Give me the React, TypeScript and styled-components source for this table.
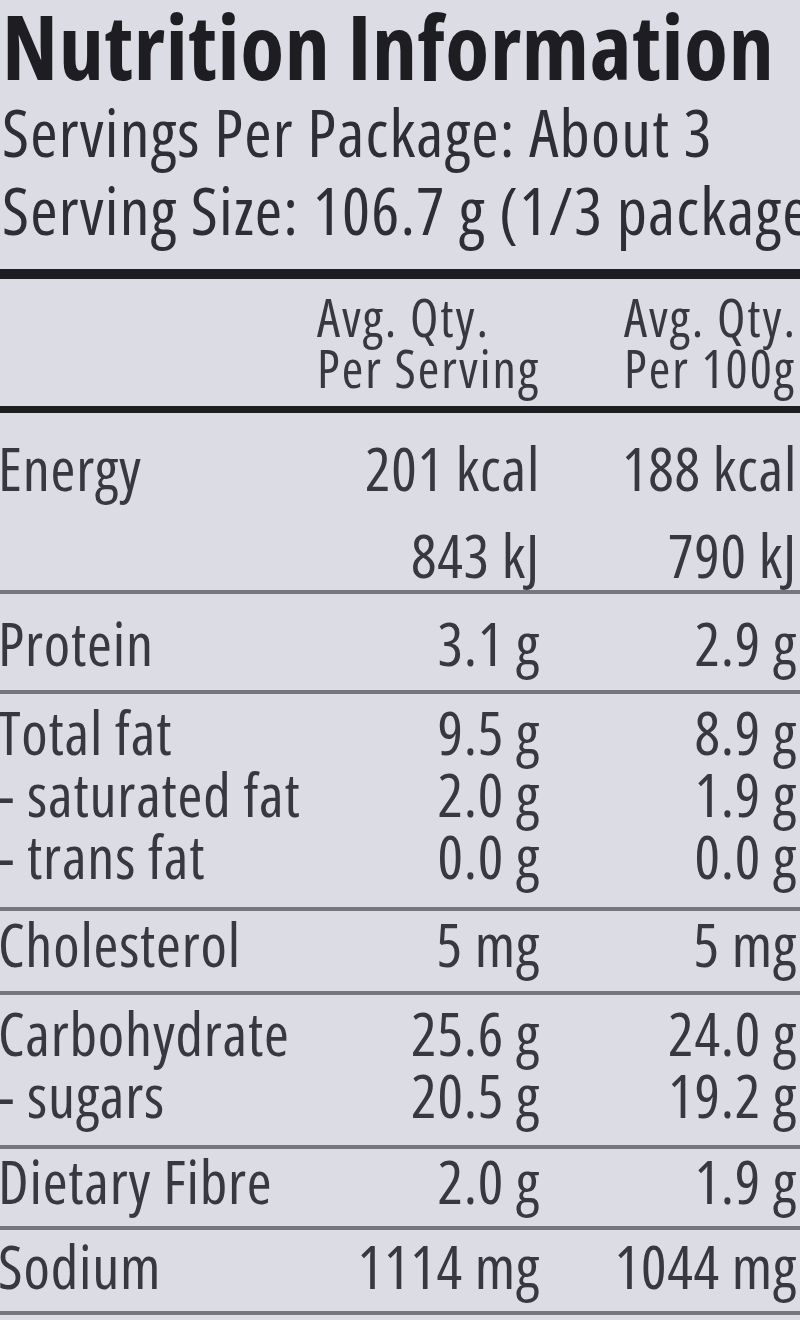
import React, { FC } from 'react';
import styled, { createGlobalStyle } from 'styled-components';

const GlobalStyle = createGlobalStyle`
    html, body {
        margin: 0;
        padding: 0;
        background: #dcdce4;
    }
    body {
        width: 800px;
        height: 1320px;
        overflow: hidden;
        font-family: "Open Sans", "Liberation Sans", sans-serif;
        font-stretch: 75%;
        color: #38383f;
    }
`;

interface Nutrient {
    label: string;
    serving: string;
    per100: string;
}

interface Group {
    rows: Nutrient[];
    padTop?: number;
    padBottom?: number;
    gap?: number;
}

const groups: Group[] = [
    {
        padTop: 24,
        padBottom: 4,
        gap: 25,
        rows: [
            { label: 'Energy', serving: '201 kcal', per100: '188 kcal' },
            { label: '', serving: '843 kJ', per100: '790 kJ' },
        ],
    },
    { padTop: 18, padBottom: 16, rows: [{ label: 'Protein', serving: '3.1 g', per100: '2.9 g' }] },
    {
        padBottom: 20,
        rows: [
            { label: 'Total fat', serving: '9.5 g', per100: '8.9 g' },
            { label: '- saturated fat', serving: '2.0 g', per100: '1.9 g' },
            { label: '- trans fat', serving: '0.0 g', per100: '0.0 g' },
        ],
    },
    { padTop: 2, padBottom: 16, rows: [{ label: 'Cholesterol', serving: '5 mg', per100: '5 mg' }] },
    {
        padTop: 7,
        padBottom: 19,
        rows: [
            { label: 'Carbohydrate', serving: '25.6 g', per100: '24.0 g' },
            { label: '- sugars', serving: '20.5 g', per100: '19.2 g' },
        ],
    },
    { padTop: 1, rows: [{ label: 'Dietary Fibre', serving: '2.0 g', per100: '1.9 g' }] },
    { padTop: 5, rows: [{ label: 'Sodium', serving: '1114 mg', per100: '1044 mg' }] },
];

const App: FC = () => {
    return (
        <Label>
            <GlobalStyle />
            <Heading>
                <Title>Nutrition Information</Title>
                <Meta>Servings Per Package: About 3</Meta>
                <Meta>Serving Size: 106.7 g (1/3 package)</Meta>
            </Heading>

            <Table>
                <HeaderRow>
                    <span />
                    <HeadCell>Avg. Qty.<br />Per Serving</HeadCell>
                    <HeadCell>Avg. Qty.<br />Per 100g</HeadCell>
                </HeaderRow>

                {groups.map((g, i) => (
                    <Section key={i} padTop={g.padTop} padBottom={g.padBottom} gap={g.gap}>
                        {g.rows.map((r, j) => (
                            <React.Fragment key={j}>
                                <Name>{r.label}</Name>
                                <Value>{r.serving}</Value>
                                <Value>{r.per100}</Value>
                            </React.Fragment>
                        ))}
                    </Section>
                ))}
            </Table>
        </Label>
    );
};

export default App;

const Label = styled.div`
    width: 800px;
    height: 1320px;
    background: #dcdce4;
    overflow: hidden;
`;

const Heading = styled.div`
    padding-left: 2px;
    padding-bottom: 21px;
`;

const Title = styled.h1`
    margin: 0 0 2px;
    font-size: 90px;
    line-height: 90px;
    font-weight: 700;
    color: #1d1d22;
    letter-spacing: 0.7px;
    white-space: nowrap;
`;

const Meta = styled.p`
    margin: 0;
    font-size: 66px;
    line-height: 78px;
    letter-spacing: 1.2px;
    white-space: nowrap;
    color: #2e2e35;
`;

const Table = styled.div`
    border-top: 10px solid #1e1e22;
`;

const Grid = styled.div`
    display: grid;
    grid-template-columns: 1fr 232px 257px;
    padding-right: 3px;
`;

const HeaderRow = styled(Grid)`
    padding-top: 12px;
    padding-bottom: 13px;
    border-bottom: 7px solid #1e1e22;
`;

const HeadCell = styled.div`
    justify-self: end;
    text-align: left;
    font-size: 52px;
    line-height: 51px;
    letter-spacing: 2px;
    white-space: nowrap;
`;

const Section = styled(Grid)<{ padTop?: number; padBottom?: number; gap?: number }>`
    padding-top: ${({ padTop }) => (padTop !== undefined ? padTop : 7)}px;
    padding-bottom: ${({ padBottom }) => (padBottom !== undefined ? padBottom : 14)}px;
    row-gap: ${({ gap }) => gap || 0}px;
    border-bottom: 4px solid #76767e;
`;

const Name = styled.div`
    font-size: 60px;
    line-height: 62px;
    letter-spacing: 0.8px;
    white-space: nowrap;
    margin-left: -2px;
`;

const Value = styled.div`
    font-size: 60px;
    line-height: 62px;
    letter-spacing: 0.8px;
    text-align: right;
    white-space: nowrap;
`;
